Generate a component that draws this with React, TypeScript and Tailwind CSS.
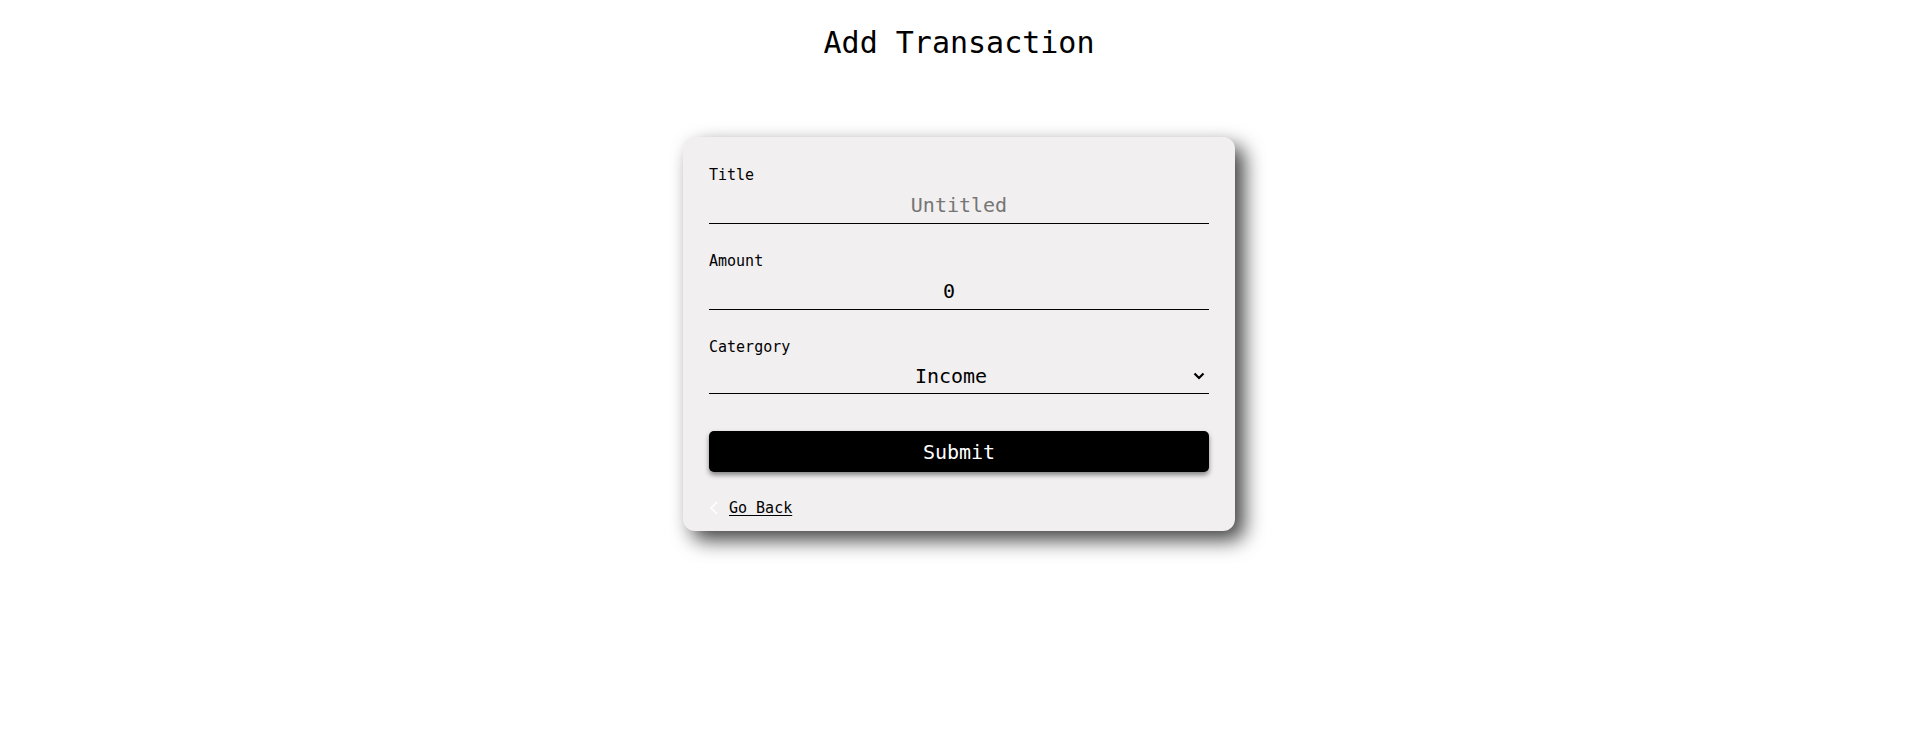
import React from "react";

export default function App() {
  const font = { fontFamily: '"DejaVu Sans Mono", "Liberation Mono", monospace' };
  return (
    <div className="min-h-[737px] w-full bg-white pl-[5px] text-black" style={font}>
      <h1 className="pt-[25px] text-center text-[30px] leading-[36px] font-normal">Add Transaction</h1>
      <div className="mt-[76px] flex justify-center">
        <div className="w-[552px] rounded-xl bg-[#f1eff0] px-[26px] pt-[29px] pb-[14px] shadow-[9px_9px_20px_rgba(0,0,0,0.75)]">
          <div className="flex flex-col">
            <label className="block text-[15px] leading-[18px]">Title</label>
            <input
              type="text"
              placeholder="Untitled"
              className="block w-full border-b border-black bg-transparent pt-[9px] pb-[6px] text-center text-[20px] leading-[24px] outline-none placeholder:text-[#767676]"
              style={font}
            />
          </div>
          <div className="mt-[28px] flex flex-col">
            <label className="block text-[15px] leading-[18px]">Amount</label>
            <input
              type="text"
              defaultValue="0"
              className="block w-full border-b border-black bg-transparent pt-[9px] pr-[20px] pb-[6px] text-center text-[20px] leading-[24px] outline-none"
              style={font}
            />
          </div>
          <div className="mt-[28px] flex flex-col">
            <label className="block text-[15px] leading-[18px]">Catergory</label>
            <div className="flex items-center border-b border-black pt-[8px] pb-[5px]">
              <span className="flex-1 text-center text-[20px] leading-[24px]">Income</span>
              <svg width="12" height="8" viewBox="0 0 12 8" className="mr-[4px]">
                <polyline points="1.5,1.5 6,6 10.5,1.5" fill="none" stroke="#000" strokeWidth="2.2" />
              </svg>
            </div>
          </div>
          <button
            className="mt-[37px] block h-[41px] w-full rounded-[5px] bg-black text-center text-[20px] leading-[24px] text-white shadow-[0_3px_5px_rgba(0,0,0,0.45)]"
            style={font}
          >
            Submit
          </button>
          <div className="mt-[27px] flex items-center text-[15px] leading-[18px]">
            <svg width="10" height="14" viewBox="0 0 10 14" className="mr-[10px]">
              <polyline points="8,1 2,7 8,13" fill="none" stroke="#ffffff" strokeWidth="1.6" />
            </svg>
            <a href="#" className="text-black underline underline-offset-2">Go Back</a>
          </div>
        </div>
      </div>
    </div>
  );
}
